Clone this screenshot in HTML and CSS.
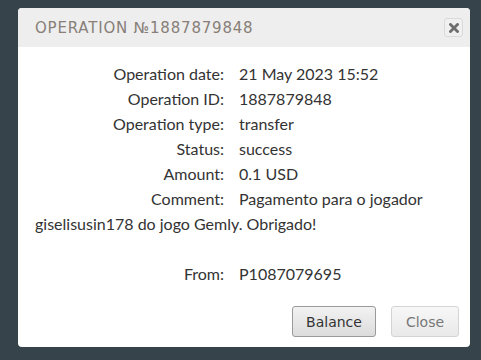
FILE: index.html
```html
<!DOCTYPE html>
<html>
<head>
<meta charset="utf-8">
<link rel="stylesheet" href="styles.css">
</head>
<body>
<div class="dialog">
  <div class="header">
    <span class="title">Operation №1887879848</span>
    <button class="x-btn" aria-label="close">
      <svg width="10" height="10" viewBox="0 0 10 10"><path d="M1.5 1.5 L8.5 8.5 M8.5 1.5 L1.5 8.5" stroke="#6e6e6e" stroke-width="2.8" stroke-linecap="square"/></svg>
    </button>
  </div>
  <div class="body">
    <div class="row"><span class="label">Operation date:</span><span class="value">21 May 2023 15:52</span></div>
    <div class="row"><span class="label">Operation ID:</span><span class="value">1887879848</span></div>
    <div class="row"><span class="label">Operation type:</span><span class="value">transfer</span></div>
    <div class="row"><span class="label">Status:</span><span class="value">success</span></div>
    <div class="row"><span class="label">Amount:</span><span class="value">0.1 USD</span></div>
    <div class="row"><span class="label">Comment:</span>Pagamento para o jogador giselisusin178 do jogo Gemly. Obrigado!</div>
    <div class="row blank"></div>
    <div class="row"><span class="label">From:</span><span class="value">P1087079695</span></div>
  </div>
  <div class="footer">
    <button class="btn balance">Balance</button>
    <button class="btn light">Close</button>
  </div>
</div>
</body>
</html>
```
FILE: styles.css
```css
html, body {
  margin: 0;
  padding: 0;
  background: #36434b;
  width: 481px;
  height: 360px;
  overflow: hidden;
}
body {
  padding: 8px 0 0 18px;
  box-sizing: border-box;
}
.dialog {
  width: 452px;
  height: 339px;
  background: #fff;
  border-radius: 4px;
  overflow: hidden;
  display: flex;
  flex-direction: column;
}
.header {
  height: 39px;
  background: #eeeeee;
  display: flex;
  align-items: center;
  justify-content: space-between;
  padding: 0 7px 0 17px;
  flex-shrink: 0;
}
.title {
  font-family: "DejaVu Sans", sans-serif;
  font-size: 15px;
  text-transform: uppercase;
  letter-spacing: 0.8px;
  color: #877f78;
}
.x-btn {
  width: 19px;
  height: 19px;
  border: 1px solid #dadada;
  border-radius: 3px;
  background: #f0f0f0;
  padding: 0;
  display: flex;
  align-items: center;
  justify-content: center;
}
.body {
  padding: 14px 17px 0 17px;
  font-family: Lato, sans-serif;
  font-size: 16px;
  color: #333;
}
.row {
  line-height: 25px;
}
.blank {
  height: 25px;
}
.label {
  display: inline-block;
  width: 189px;
  text-align: right;
  margin-right: 15px;
}
.footer {
  margin-top: auto;
  display: flex;
  justify-content: flex-end;
  gap: 15px;
  padding: 0 11px 10px 0;
}
.btn {
  height: 31px;
  padding: 0;
  font-family: "DejaVu Sans", sans-serif;
  font-size: 14px;
  color: #333;
  border: 1px solid #9a9a9a;
  border-radius: 3px;
  background: linear-gradient(#f2f2f2, #dcdcdc);
}
.btn.balance {
  width: 84px;
}
.btn.light {
  width: 68px;
  color: #777;
  border-color: #d4d4d4;
  background: linear-gradient(#f7f7f7, #e9e9e9);
}
```
